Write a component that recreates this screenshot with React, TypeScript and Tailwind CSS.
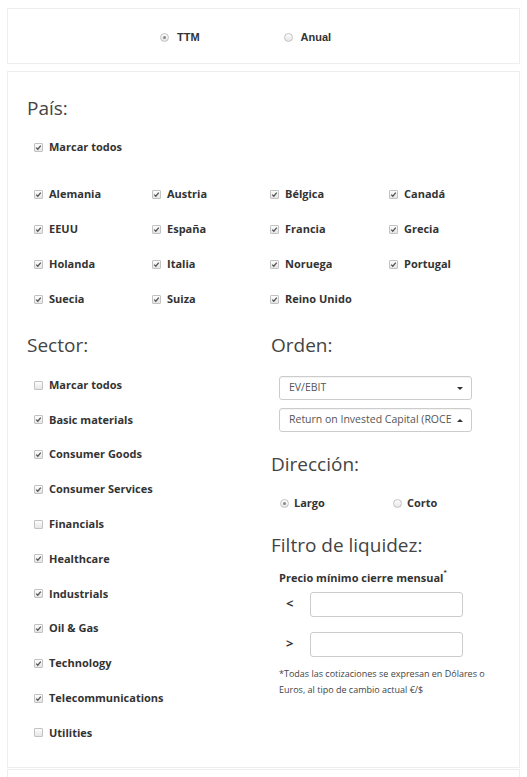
import React from 'react';

const countries = [
  'Alemania', 'Austria', 'Bélgica', 'Canadá',
  'EEUU', 'España', 'Francia', 'Grecia',
  'Holanda', 'Italia', 'Noruega', 'Portugal',
  'Suecia', 'Suiza', 'Reino Unido',
];

const sectors = [
  { name: 'Marcar todos', checked: false },
  { name: 'Basic materials', checked: true },
  { name: 'Consumer Goods', checked: true },
  { name: 'Consumer Services', checked: true },
  { name: 'Financials', checked: false },
  { name: 'Healthcare', checked: true },
  { name: 'Industrials', checked: true },
  { name: 'Oil & Gas', checked: true },
  { name: 'Technology', checked: true },
  { name: 'Telecommunications', checked: true },
  { name: 'Utilities', checked: false },
];

function Check({ checked }: { checked: boolean }) {
  return (
    <span className="w-[9px] h-[9px] border border-[#c2c2c2] rounded-[1px] bg-gradient-to-b from-[#fdfdfd] to-[#e6e6e6] flex items-center justify-center shrink-0">
      {checked && (
        <svg width="7" height="7" viewBox="0 0 7 7">
          <path d="M1.2 3.6 L2.8 5.2 L5.8 1.6" fill="none" stroke="#555" strokeWidth="1.3" />
        </svg>
      )}
    </span>
  );
}

function Radio({ checked }: { checked: boolean }) {
  return (
    <span className="w-[9px] h-[9px] rounded-full border border-[#c2c2c2] bg-gradient-to-b from-[#fdfdfd] to-[#e6e6e6] flex items-center justify-center shrink-0">
      {checked && <span className="w-[3px] h-[3px] rounded-full bg-[#888]" />}
    </span>
  );
}

function Item({ label, checked }: { label: string; checked: boolean }) {
  return (
    <label className="flex items-center gap-[6px] h-[16px] text-[11px] font-bold text-[#333]">
      <Check checked={checked} />
      <span>{label}</span>
    </label>
  );
}

function Heading({ children }: { children: React.ReactNode }) {
  return <h2 className="text-[19px] leading-[24px] font-normal text-[#444]">{children}</h2>;
}

function Select({ value, up }: { value: string; up?: boolean }) {
  return (
    <div className="w-[193px] h-[24px] border border-[#ccc] rounded-[3px] bg-white shadow-[inset_0_1px_1px_rgba(0,0,0,0.05)] flex items-center pl-[9px] pr-[8px] text-[10.5px] text-[#555]">
      <span className="flex-1 whitespace-nowrap overflow-hidden">{value}</span>
      <svg width="6" height="3" viewBox="0 0 6 3" className="ml-[5px] shrink-0">
        {up ? <path d="M0 3 L3 0 L6 3 Z" fill="#333" /> : <path d="M0 0 L6 0 L3 3 Z" fill="#333" />}
      </svg>
    </div>
  );
}

export default function App() {
  return (
    <div className="w-[527px] h-[777px] bg-white overflow-hidden pt-[8px] px-[7px] font-['Open_Sans',sans-serif]">
      <div className="h-[56px] border border-[#eee] flex items-center gap-[84px] pl-[152px] pt-[2px] font-['Liberation_Sans',Arial,sans-serif] text-[11px] font-bold text-[#333]">
        <label className="flex items-center gap-[8px]">
          <Radio checked />
          <span>TTM</span>
        </label>
        <label className="flex items-center gap-[8px]">
          <Radio checked={false} />
          <span>Anual</span>
        </label>
      </div>

      <div className="mt-[7px] h-[697px] border border-[#eee] px-[19px] pt-[24px]">
        <Heading>País:</Heading>
        <div className="mt-[19px] pl-[7px]">
          <Item label="Marcar todos" checked />
        </div>
        <div className="mt-[31px] pl-[7px] grid grid-cols-[118px_118px_119px_1fr] gap-y-[19px]">
          {countries.map((c) => (
            <Item key={c} label={c} checked />
          ))}
        </div>

        <div className="mt-[26px] grid grid-cols-[244px_1fr]">
          <div>
            <Heading>Sector:</Heading>
            <div className="mt-[20px] pl-[7px] flex flex-col gap-[18.8px]">
              {sectors.map((s) => (
                <Item key={s.name} label={s.name} checked={s.checked} />
              ))}
            </div>
          </div>
          <div>
            <Heading>Orden:</Heading>
            <div className="mt-[19px] pl-[8px] flex flex-col gap-[8px]">
              <Select value="EV/EBIT" />
              <Select value="Return on Invested Capital (ROCE)" up />
            </div>
            <div className="mt-[20px]">
              <Heading>Dirección:</Heading>
            </div>
            <div className="mt-[19px] pl-[9px] flex items-center">
              <label className="w-[113px] flex items-center gap-[5px] text-[11px] font-bold text-[#333]">
                <Radio checked />
                <span>Largo</span>
              </label>
              <label className="flex items-center gap-[5px] text-[11px] font-bold text-[#333]">
                <Radio checked={false} />
                <span>Corto</span>
              </label>
            </div>
            <div className="mt-[21px]">
              <Heading>Filtro de liquidez:</Heading>
            </div>
            <div className="mt-[13px] pl-[8px]">
              <div className="text-[11px] font-bold text-[#333] leading-[16px]">
                Precio mínimo cierre mensual<sup className="text-[6px] align-super">*</sup>
              </div>
              <div className="mt-[6px] flex items-center">
                <span className="w-[31px] pl-[7px] text-[13px] font-bold text-[#333]">&lt;</span>
                <div className="w-[153px] h-[25px] border border-[#ccc] rounded-[3px] bg-white" />
              </div>
              <div className="mt-[15px] flex items-center">
                <span className="w-[31px] pl-[7px] text-[13px] font-bold text-[#333]">&gt;</span>
                <div className="w-[153px] h-[25px] border border-[#ccc] rounded-[3px] bg-white" />
              </div>
              <p className="mt-[9px] text-[9px] leading-[16px] text-[#444] w-[215px]">
                *Todas las cotizaciones se expresan en Dólares o Euros, al tipo de cambio actual €/$
              </p>
            </div>
          </div>
        </div>
      </div>
      <div className="mt-[1px] h-[20px] border border-[#eee]" />
    </div>
  );
}
